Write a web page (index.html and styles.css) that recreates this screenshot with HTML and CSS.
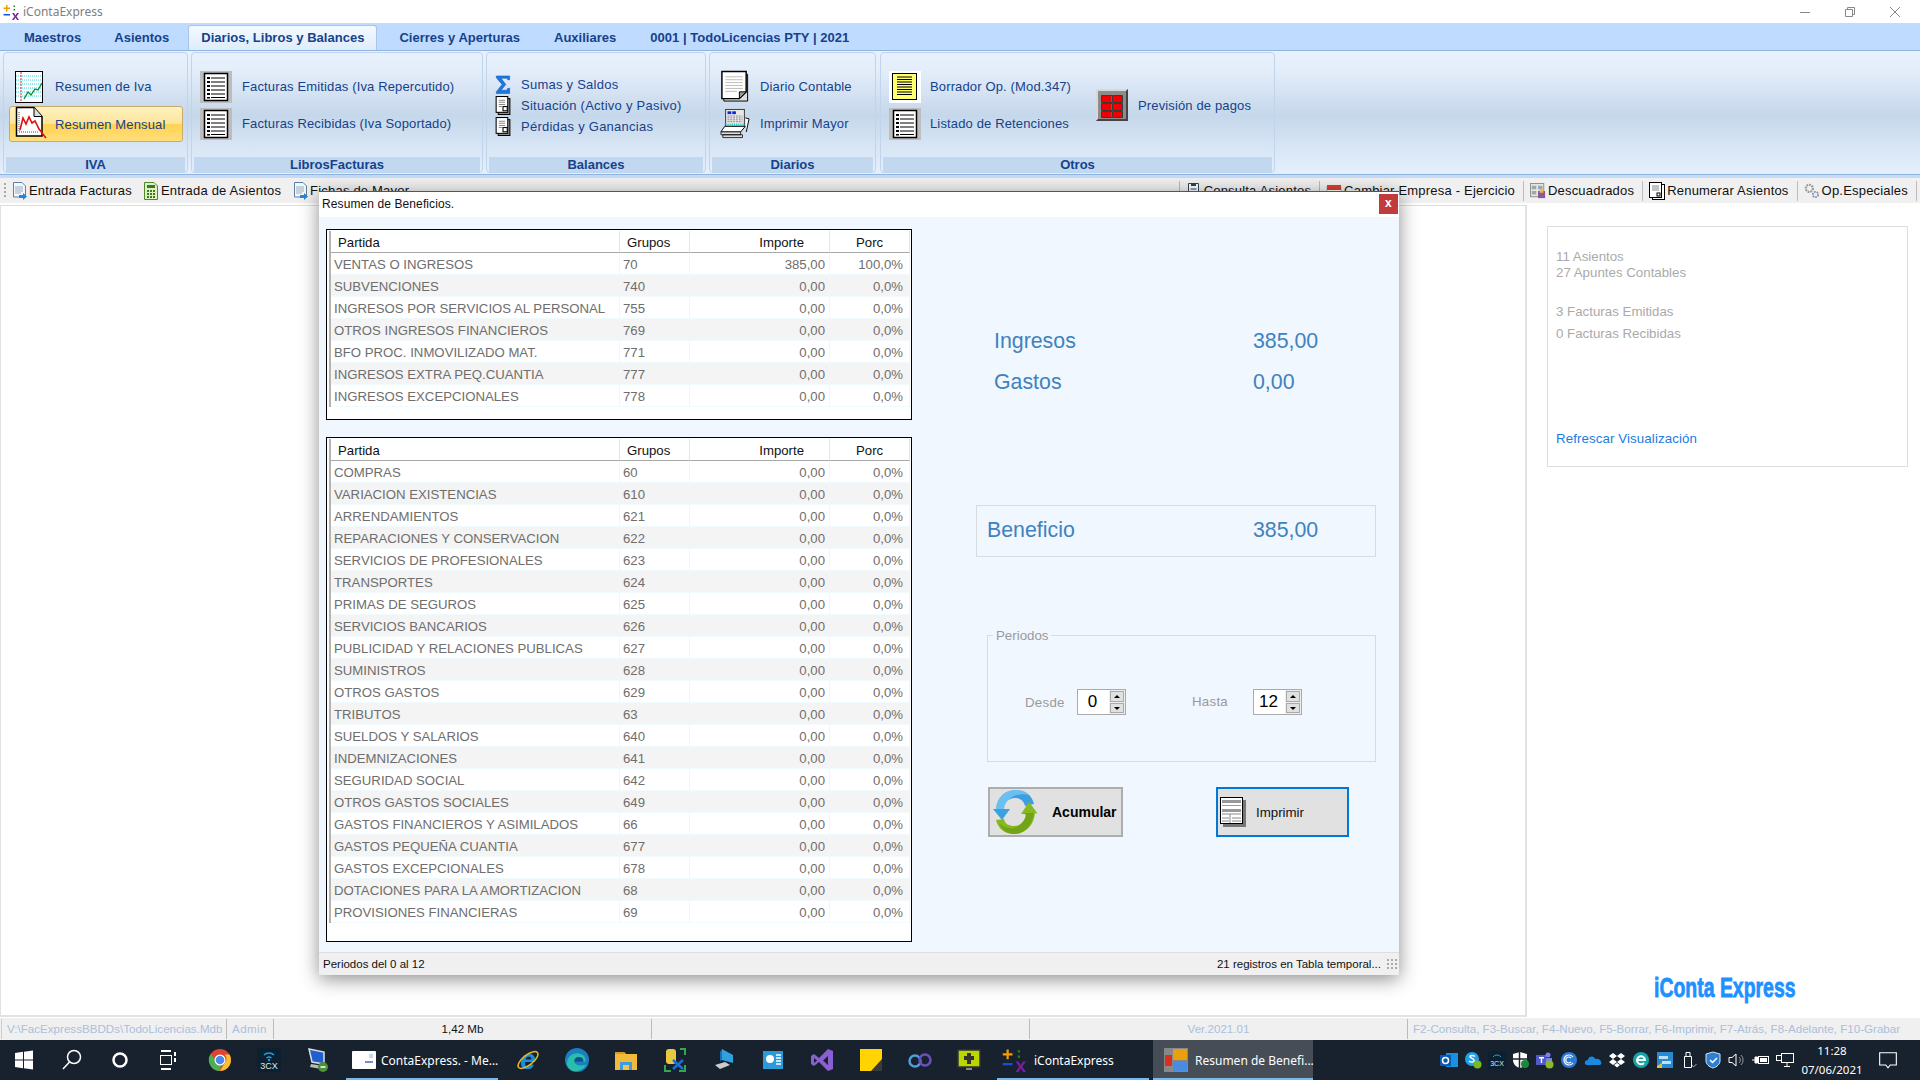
FILE: index.html
```html
<!DOCTYPE html>
<html lang="es">
<head>
<meta charset="utf-8">
<title>iContaExpress</title>
<link rel="stylesheet" href="styles.css">
</head>
<body>
<svg class="defs" width="0" height="0" aria-hidden="true">
  <symbol id="i-conta" viewBox="0 0 32 32"><path d="M6 2h3v5h5v3H9v5H6v-5H1V7h5z" fill="#f59b00"/><path d="M21 3h3v3h-3zM21 10h3v3h-3z" fill="#1b8a1b"/><path d="M1 20h13v3H1z" fill="#1450e0"/><path d="M18 18h4l3 5 3-5h4l-5 7 5 7h-4l-3-5-3 5h-4l5-7z" fill="#7a1fa0"/></symbol>
  <symbol id="i-chart" viewBox="0 0 28 32"><rect x=".5" y=".5" width="27" height="31" fill="#fff" stroke="#000"/><path d="M1 5h26M1 9h26M1 13h26M1 17h26M1 21h26M1 25h26" stroke="#35d5e0" stroke-dasharray="1 1"/><path d="M6 1v30" stroke="#e02020" stroke-dasharray="2 1"/><path d="M9 28l4-7 3 3 4-6 3 1 4-7" fill="none" stroke="#0a8a2a" stroke-width="1.3"/></symbol>
  <symbol id="i-mensual" viewBox="0 0 32 36"><path d="M1.500 1.500H19l8 9V30H1.500z" fill="#fff" stroke="#000" stroke-width="1.500"/><path d="M19 1.500v9h8" fill="#ddd" stroke="#000"/><path d="M4 6v20h20" fill="none" stroke="#555" stroke-dasharray="1 1"/><path d="M5 24l3-12 3 6 3-7 3 6 3-2 4 8 7 9" fill="none" stroke="#e01010" stroke-width="1.600"/></symbol>
  <symbol id="i-list" viewBox="0 0 32 32"><rect width="32" height="32" fill="#bdbdbd"/><rect x="4.500" y="2.500" width="23" height="27" fill="#fff" stroke="#000" stroke-width="1.500"/><path d="M7 6h3v2H7zM7 10h3v2H7zM7 14h3v2H7zM7 18h3v2H7zM7 22h3v2H7zM7 26h3v1.500H7z" fill="#000"/><path d="M11 7h14M11 11h14M11 15h14M11 19h14M11 23h14M11 26.500h14" stroke="#000"/></symbol>
  <symbol id="i-sigma" viewBox="0 0 16 20"><path d="M1 1h14v4h-2l-1-1.500H6l5 6.500-5 6h6l1-2h2v5.500H1v-2l6-7.500-6-7z" fill="#1a78e0" stroke="#0c4fa8" stroke-width=".5"/></symbol>
  <symbol id="i-doc" viewBox="0 0 14 18"><rect x="2.500" y="2.500" width="11" height="15" fill="#999" stroke="#000"/><rect x=".5" y=".5" width="11" height="15" fill="#fff" stroke="#000"/><path d="M3 4h6M3 6h6M3 8h6M3 10h3" stroke="#888"/><rect x="7" y="10" width="4" height="4" fill="#fff" stroke="#000"/></symbol>
  <symbol id="i-diario" viewBox="0 0 30 34"><path d="M3.500 4.500H28V32H3.500z" fill="#ddd" stroke="#000"/><path d="M1.500 1.500h25v21l-7 7H1.500z" fill="#fff" stroke="#000" stroke-width="1.500"/><path d="M19.500 29.500v-7h7z" fill="#999" stroke="#000"/><path d="M5 7h18M5 10h18M5 13h18M5 16h18M5 19h18M5 22h12" stroke="#bbb"/></symbol>
  <symbol id="i-print" viewBox="0 0 32 32"><rect x="6" y="1" width="20" height="18" fill="#e8e8e8" stroke="#333"/><rect x="8" y="3" width="4" height="3" fill="#1528d8"/><rect x="13" y="3" width="4" height="3" fill="#1528d8"/><path d="M8 8h16M8 10h16M8 12h16M8 14h16" stroke="#888" stroke-dasharray="2 1"/><path d="M5 17h22" stroke="#20c8c8" stroke-width="2" stroke-dasharray="1 1"/><path d="M5 19h22l-5 6H1z" fill="#fff" stroke="#000"/><path d="M1 25h21v3H1zM3 28h21v3H3z" fill="#ddd" stroke="#000" stroke-width=".8"/><path d="M27 10l4 1-3 14" fill="#fff" stroke="#000"/></symbol>
  <symbol id="i-yellow" viewBox="0 0 32 32"><rect width="32" height="32" fill="#fff"/><rect x="3" y="2" width="25" height="27" fill="#bbb"/><rect x="3.500" y="2.500" width="24" height="26" fill="#ffff70" stroke="#000"/><path d="M8 6h15M8 8.500h15M8 11h15M8 13.500h15M8 16h15M8 18.500h15M8 21h15M8 23.500h15" stroke="#000"/></symbol>
  <symbol id="i-grid" viewBox="0 0 32 32"><rect width="32" height="32" fill="#8c8c8c"/><path d="M0 0h32l-2 2H2v28l-2 2z" fill="#d8d8d8"/><path d="M32 32H0l2-2h28V2l2-2z" fill="#444"/><path d="M6 7h9v6H6zM17 7h9v6h-9zM6 15h9v6H6zM17 15h9v6h-9zM6 23h9v5H6zM17 23h9v5h-9z" fill="#f00000"/><path d="M5.500 6.500h10.500v7h-10.500zM16.500 6.500h10v7h-10zM5.500 14.500h10.500v7h-10.500zM16.500 14.500h10v7h-10zM5.500 22.500h10.500v6h-10.500zM16.500 22.500h10v6h-10z" fill="none" stroke="#3a3a3a"/></symbol>
  <symbol id="t-doc" viewBox="0 0 16 18"><path d="M2.500 .5H11l3.500 3.500V15h-12z" fill="#f4f8fc" stroke="#5b7fa8"/><path d="M4 5h8M4 7h8M4 9h8M4 11h6" stroke="#9ab"/><path d="M8 13h4v-2l4 3.500-4 3.500v-2H8z" fill="#2a84d8"/></symbol>
  <symbol id="t-calc" viewBox="0 0 16 18"><path d="M1.500 .5H11l3.500 3.500V17.500h-13z" fill="#dff0c8" stroke="#4f8a2a"/><rect x="4" y="3" width="8" height="3" fill="#3f7a1a"/><path d="M4 8h2v2H4zM7 8h2v2H7zM10 8h2v2h-2zM4 11h2v2H4zM7 11h2v2H7zM10 11h2v2h-2zM4 14h2v2H4zM7 14h2v2H7zM10 14h2v2h-2z" fill="#3f7a1a"/></symbol>
  <symbol id="t-cons" viewBox="0 0 14 18"><path d="M1.500 1.500h10v15h-10z" fill="#fff" stroke="#345"/><path d="M4 1h5v3H4z" fill="#246"/><path d="M3.500 7h6M3.500 10h6" stroke="#246"/></symbol>
  <symbol id="t-cal" viewBox="0 0 16 16"><rect x="1" y="4" width="14" height="11" fill="#fff" stroke="#bbb"/><rect x="1" y="2" width="14" height="5" fill="#d8402f"/></symbol>
  <symbol id="t-desc" viewBox="0 0 18 18"><rect x=".5" y=".5" width="15" height="15" fill="#e4e4e4" stroke="#888"/><path d="M2 3h5v4H2zM9 3h5v4H9zM2 9h5v4H2z" fill="#9aa"/><rect x="9" y="9" width="8" height="8" fill="#8a5a9a"/><rect x="11" y="7" width="4" height="4" fill="#e8b850"/></symbol>
  <symbol id="t-renum" viewBox="0 0 16 18"><rect x="3.500" y="2.500" width="12" height="15" fill="#fff" stroke="#000"/><rect x=".5" y=".5" width="12" height="15" fill="#fff" stroke="#000"/><path d="M3 4h7M3 6h7M3 8h7" stroke="#888"/><rect x="8" y="11" width="3" height="3" fill="none" stroke="#000"/></symbol>
  <symbol id="t-gear" viewBox="0 0 18 18"><circle cx="6" cy="6" r="4" fill="none" stroke="#999" stroke-width="2.500" stroke-dasharray="2 1"/><circle cx="13" cy="13" r="3" fill="none" stroke="#7a8fa8" stroke-width="2" stroke-dasharray="2 1"/></symbol>
  <symbol id="r-arrows" viewBox="0 0 44 46"><path d="M3 20C4 8 12 1 23 1c10 0 16 6 18 14l-9 2c-1-5-5-8-10-8-7 0-11 5-11 11h6l-8 11L0 20z" fill="#3b9fe0"/><path d="M3 20C4 8 12 1 23 1c6 0 10 2 13 5-10-2-22 0-25 14z" fill="#7fd0f8" opacity=".7"/><path d="M42 24c-1 12-9 21-21 21-10 0-16-6-18-14l8-1c1 5 5 7 10 7 6 0 11-4 12-12h-5l8-12 9 12z" fill="#86b820"/><path d="M6 34c5 6 20 10 27-7l-2-3h10c-2 12-9 21-20 21-7 0-12-4-15-11z" fill="#5f8f10" opacity=".5"/></symbol>
  <symbol id="r-print" viewBox="0 0 26 30"><rect x="3" y="3" width="23" height="27" fill="#777"/><rect x=".5" y=".5" width="22" height="26" fill="#fff" stroke="#000"/><path d="M2 3h19v3H2zM2 8h19v1H2zM2 12h19v3H2z" fill="#999"/><path d="M2 17h19M10 17v9M2 21h7M12 21h9M2 24h7M12 24h9" stroke="#888"/></symbol>
</svg>

<div class="titlebar">
  <svg class="tb-logo"><use href="#i-conta"/></svg>
  <span class="tb-name">iContaExpress</span>
  <div class="winctl">
    <svg class="wc" viewBox="0 0 14 14"><path d="M2 7.500h10" stroke="#888"/></svg>
    <svg class="wc" viewBox="0 0 14 14"><path d="M2.500 4.500h7v7h-7zM4.500 4.500v-2h7v7h-2" fill="none" stroke="#888"/></svg>
    <svg class="wc" viewBox="0 0 14 14"><path d="M2 2l10 10M12 2L2 12" stroke="#888"/></svg>
  </div>
</div>

<nav class="tabs">
  <span class="tab tab-first">Maestros</span>
  <span class="tab tab-second">Asientos</span>
  <span class="tab tab-active">Diarios, Libros y Balances</span>
  <span class="tab">Cierres y Aperturas</span>
  <span class="tab">Auxiliares</span>
  <span class="tab">0001 | TodoLicencias PTY | 2021</span>
</nav>

<section class="ribbon">
  <div class="rgroup g-iva">
    <div class="rbody rcol">
      <div class="ritem"><svg class="ic-chart"><use href="#i-chart"/></svg><span>Resumen de Iva</span></div>
      <div class="ritem ritem-on"><svg class="ic-mensual"><use href="#i-mensual"/></svg><span>Resumen Mensual</span></div>
    </div>
    <div class="rlabel">IVA</div>
  </div>
  <div class="rgroup g-libros">
    <div class="rbody rcol">
      <div class="ritem"><svg class="ic-32"><use href="#i-list"/></svg><span>Facturas Emitidas (Iva Repercutido)</span></div>
      <div class="ritem"><svg class="ic-32"><use href="#i-list"/></svg><span>Facturas Recibidas (Iva Soportado)</span></div>
    </div>
    <div class="rlabel">LibrosFacturas</div>
  </div>
  <div class="rgroup g-bal">
    <div class="rbody rcol">
      <div class="ritem-s"><svg class="ic-s"><use href="#i-sigma"/></svg><span>Sumas y Saldos</span></div>
      <div class="ritem-s"><svg class="ic-s"><use href="#i-doc"/></svg><span>Situación (Activo y Pasivo)</span></div>
      <div class="ritem-s"><svg class="ic-s"><use href="#i-doc"/></svg><span>Pérdidas y Ganancias</span></div>
    </div>
    <div class="rlabel">Balances</div>
  </div>
  <div class="rgroup g-dia">
    <div class="rbody rcol">
      <div class="ritem"><svg class="ic-diario"><use href="#i-diario"/></svg><span>Diario Contable</span></div>
      <div class="ritem"><svg class="ic-diario"><use href="#i-print"/></svg><span>Imprimir Mayor</span></div>
    </div>
    <div class="rlabel">Diarios</div>
  </div>
  <div class="rgroup g-otros">
    <div class="rbody rrow">
      <div class="rcol otros-a">
        <div class="ritem"><svg class="ic-32"><use href="#i-yellow"/></svg><span>Borrador Op. (Mod.347)</span></div>
        <div class="ritem"><svg class="ic-32"><use href="#i-list"/></svg><span>Listado de Retenciones</span></div>
      </div>
      <div class="ritem otros-b"><svg class="ic-32"><use href="#i-grid"/></svg><span>Previsión de pagos</span></div>
    </div>
    <div class="rlabel">Otros</div>
  </div>
</section>

<div class="toolbar">
  <div class="tgroup">
    <span class="grip"></span>
    <span class="titem"><svg class="ic-t"><use href="#t-doc"/></svg>Entrada Facturas</span>
    <span class="titem"><svg class="ic-t"><use href="#t-calc"/></svg>Entrada de Asientos</span>
    <span class="titem"><svg class="ic-t"><use href="#t-doc"/></svg>Fichas de Mayor</span>
  </div>
  <div class="tgroup tgroup-r">
    <span class="titem tsep"><svg class="ic-t"><use href="#t-cons"/></svg>Consulta Asientos</span>
    <span class="titem tsep"><svg class="ic-t"><use href="#t-cal"/></svg>Cambiar Empresa - Ejercicio</span>
    <span class="titem tsep"><svg class="ic-t"><use href="#t-desc"/></svg>Descuadrados</span>
    <span class="titem tsep"><svg class="ic-t"><use href="#t-renum"/></svg>Renumerar Asientos</span>
    <span class="titem tsep tlast"><svg class="ic-t"><use href="#t-gear"/></svg>Op.Especiales</span>
  </div>
</div>

<main class="workspace">
  <div class="canvas"></div>
  <aside class="side">
    <div class="card">
      <p class="c1">11 Asientos</p>
      <p>27 Apuntes Contables</p>
      <p class="c2">3 Facturas Emitidas</p>
      <p class="c3">0 Facturas Recibidas</p>
      <p class="c4">Refrescar Visualización</p>
    </div>
    <div class="brand"><span>iConta Express</span></div>
  </aside>
</main>

<footer class="status">
  <span class="sc sc-path">V:\FacExpressBBDDs\TodoLicencias.Mdb</span>
  <span class="sc sc-user">Admin</span>
  <span class="sc sc-size">1,42 Mb</span>
  <span class="sc sc-empty"></span>
  <span class="sc sc-ver">Ver.2021.01</span>
  <span class="sc sc-keys">F2-Consulta, F3-Buscar, F4-Nuevo, F5-Borrar, F6-Imprimir, F7-Atrás, F8-Adelante, F10-Grabar</span>
</footer>

<div class="taskbar">
  <div class="tk-left">
    <span class="tk tk-sys"><svg class="ti" viewBox="0 0 24 24"><path d="M3 5l8-1.200v7.700H3zM12 3.700L21 2.500v9h-9zM3 12.500h8v7.700L3 19zM12 12.500h9v9l-9-1.200z" fill="#fff"/></svg></span>
    <span class="tk tk-sys"><svg class="ti" viewBox="0 0 24 24"><circle cx="14" cy="9" r="6.500" fill="none" stroke="#fff" stroke-width="1.500"/><path d="M9.500 14L3 21" stroke="#fff" stroke-width="1.500"/></svg></span>
    <span class="tk tk-sys"><svg class="ti" viewBox="0 0 24 24"><circle cx="12" cy="12" r="6.500" fill="none" stroke="#fff" stroke-width="2.500"/></svg></span>
    <span class="tk tk-sys"><svg class="ti" viewBox="0 0 24 24"><path d="M5 2h10v2H5zM5 20h10v2H5zM18 4h2v4h-2zM18 10h2v4h-2z" fill="#fff"/><rect x="4.500" y="7.500" width="11" height="9" fill="none" stroke="#fff"/></svg></span>
    <span class="tk tk-chrome"><svg class="ti" viewBox="0 0 24 24"><circle cx="12" cy="12" r="11" fill="#db4437"/><path d="M21.500 6.500A11 11 0 0 1 12 23l5-8.500a5.500 5.500 0 0 0-.5-8z" fill="#fbc02d"/><path d="M12 23A11 11 0 0 1 3 5.500L8 14a5.500 5.500 0 0 0 5 3.500z" fill="#4caf50"/><circle cx="12" cy="12" r="5.500" fill="#fff"/><circle cx="12" cy="12" r="4.300" fill="#4a8af0"/></svg></span>
    <span class="tk"><svg class="ti" viewBox="0 0 24 24"><rect width="24" height="24" rx="2" fill="#0c2030"/><path d="M7 7a7 7 0 0 1 10 0M9.500 10a4 4 0 0 1 5 0" fill="none" stroke="#1fa0d8" stroke-width="1.500"/><circle cx="12" cy="12" r="1.200" fill="#1fa0d8"/><text x="12" y="21" class="svgtxt">3CX</text></svg></span>
    <span class="tk"><svg class="ti" viewBox="0 0 24 24"><path d="M3 1l15 3v12L6 14z" fill="#1f5fcf" stroke="#ddd" stroke-width="1.500"/><path d="M5 16l13 2-3 3-11-2z" fill="#bbb"/><circle cx="17" cy="19" r="5" fill="#4f8f3a"/><path d="M14.500 19h5" stroke="#fff" stroke-width="1.500"/></svg></span>
    <span class="tk-app tk-on tk-mail"><svg class="ti" viewBox="0 0 24 24"><rect y="3" width="24" height="18" rx="1" fill="#fff"/><path d="M13 13h8v2h-8z" fill="#6d93c8"/><path d="M17 6h4v4h-4z" fill="#c8d8ec"/></svg><span>ContaExpress. - Me...</span></span>
    <span class="tk"><svg class="ti" viewBox="0 0 24 24"><text x="12" y="21" class="svg-e">e</text><ellipse cx="12" cy="12" rx="12" ry="5" transform="rotate(-38 12 12)" fill="none" stroke="#e8b420" stroke-width="1.500"/></svg></span>
    <span class="tk"><svg class="ti" viewBox="0 0 26 26"><circle cx="13" cy="13" r="13" fill="#1a7fc0"/><path d="M2 16C3 8 10 5 15 6c6 1 8 5 7 9H10c1 4 6 5 13 3-3 6-9 8-14 7-4-1-7-5-7-9z" fill="#2fc8a8" opacity=".85"/><path d="M10 15c0-4 3-6 6-5 3 0 4 2 4 5z" fill="#0d4f88"/></svg></span>
    <span class="tk"><svg class="ti" viewBox="0 0 24 24"><path d="M1 4h9l2 2h11v16H1z" fill="#f0b93a"/><path d="M1 4h9l2 2H1z" fill="#d89a20"/><rect x="6" y="14" width="12" height="8" fill="#3d9be0"/><rect x="9" y="17" width="6" height="5" fill="#f0c64a"/></svg></span>
    <span class="tk"><svg class="ti" viewBox="0 0 24 24"><rect x="3" y="1" width="10" height="15" rx="3" fill="#e8c840"/><path d="M2 17v6h6M22 17v6h-6M22 7V1h-5" fill="none" stroke="#2fa84f" stroke-width="2"/><path d="M10 12l10 9M20 12L10 21" stroke="#1a70d8" stroke-width="2.500"/></svg></span>
    <span class="tk"><svg class="ti" viewBox="0 0 24 24"><path d="M10 1l11 6v8l-11-3z" fill="#2fa0e0"/><path d="M10 1v11l-2 1V4z" fill="#1a70b0"/><path d="M3 17l10-3 5 3-10 4z" fill="#ccc"/></svg></span>
    <span class="tk"><svg class="ti" viewBox="0 0 24 24"><rect x="2" y="3" width="20" height="18" fill="#2a9ad8"/><circle cx="9" cy="11" r="4" fill="#fff"/><path d="M15 7h5M15 10h5M15 13h5M15 16h5" stroke="#fff" stroke-width="1.500"/></svg></span>
    <span class="tk"><svg class="ti" viewBox="0 0 24 24"><path d="M1 8l3-2 5 4 9-9 5 2v18l-5 2-9-9-5 4-3-2zM4 10v5l3-2.500zM18 8l-5 4.500 5 4.500z" fill="#8a5fd0"/></svg></span>
    <span class="tk"><svg class="ti" viewBox="0 0 24 24"><rect x="1" y="1" width="22" height="22" fill="#ffd400"/><path d="M23 11L12 23h11z" fill="#3a3a3a"/></svg></span>
    <span class="tk"><svg class="ti" viewBox="0 0 24 24"><circle cx="7" cy="13" r="5.500" fill="none" stroke="#4f9fd8" stroke-width="2.500"/><circle cx="17" cy="12" r="5.500" fill="none" stroke="#6a4fc0" stroke-width="2.500"/></svg></span>
    <span class="tk"><svg class="ti" viewBox="0 0 24 24"><rect x="1" y="2" width="22" height="17" fill="#b8d800" stroke="#333" stroke-width="1.500"/><path d="M10 5h4v3h3v4h-3v4h-4v-4H7V8h3z" fill="#333"/><path d="M9 21h6" stroke="#888" stroke-width="2"/></svg></span>
    <span class="tk-app tk-on tk-conta"><svg class="ti"><use href="#i-conta"/></svg><span>iContaExpress</span></span>
    <span class="tk-app tk-on tk-active"><svg class="ti" viewBox="0 0 24 24"><rect width="24" height="24" fill="#888"/><rect x="9" y="1" width="14" height="11" fill="#e8a010"/><rect x="9" y="13" width="14" height="10" fill="#4a8ae0"/><rect x="1" y="7" width="7" height="11" fill="#d83020"/></svg><span>Resumen de Benefi...</span></span>
  </div>
  <div class="tk-tray">
    <svg class="tr" viewBox="0 0 18 18"><rect x="6" y="2" width="12" height="14" fill="#1a90e0"/><rect y="4" width="11" height="11" fill="#0a5ab0"/><circle cx="5.500" cy="9.500" r="3" fill="none" stroke="#fff" stroke-width="1.500"/></svg>
    <svg class="tr" viewBox="0 0 18 18"><circle cx="8" cy="8" r="7" fill="#1fa0e8"/><path d="M5 10c2 2 6 1 5-1S6 7 6 5.500s4-1 5 0" fill="none" stroke="#fff" stroke-width="1.500"/><circle cx="13.500" cy="13.500" r="4" fill="#7ab82a"/></svg>
    <svg class="tr" viewBox="0 0 18 18"><rect width="18" height="18" fill="#0c2030"/><path d="M5 6a5 5 0 0 1 8 0" fill="none" stroke="#1fa0d8"/><text x="9" y="15" class="svgtxt svgtxt-s">3CX</text></svg>
    <svg class="tr" viewBox="0 0 18 18"><path d="M8 1l7 2v6c0 4-3 7-7 8-4-1-7-4-7-8V3z" fill="#fff"/><path d="M7.500 1v16M1 8h14" stroke="#18222e" stroke-width="1.500"/><circle cx="13" cy="13" r="4" fill="#1a8a3a"/></svg>
    <svg class="tr" viewBox="0 0 18 18"><rect y="4" width="10" height="10" fill="#5059c9"/><path d="M3 6h5v1.500H6.200V12H4.800V7.500H3z" fill="#fff"/><circle cx="12" cy="4" r="2.500" fill="#7b83eb"/><rect x="10" y="7" width="6" height="6" fill="#7b83eb"/><circle cx="13.500" cy="13.500" r="4" fill="#8ab82a"/></svg>
    <svg class="tr" viewBox="0 0 18 18"><circle cx="9" cy="9" r="8" fill="#2a7ad8"/><path d="M13 6a5 5 0 1 0 0 6M11 7a3 3 0 1 0 0 4" fill="none" stroke="#fff" stroke-width="1.200"/></svg>
    <svg class="tr" viewBox="0 0 18 18"><path d="M3 14c-3 0-3-5 1-5 0-4 6-5 7-1 3-1 6 1 6 3 1 2 0 3-2 3z" fill="#1a8ae0"/></svg>
    <svg class="tr" viewBox="0 0 18 18"><path d="M5 2l4 3-4 3-4-3zM13 2l4 3-4 3-4-3zM5 8l4 3-4 3-4-3zM13 8l4 3-4 3-4-3zM9 12l3 2-3 2.500L6 14z" fill="#fff"/></svg>
    <svg class="tr" viewBox="0 0 18 18"><circle cx="9" cy="9" r="8" fill="#16a5a5"/><path d="M5 9h8a4 4 0 1 0-1 3" fill="none" stroke="#fff" stroke-width="2"/></svg>
    <svg class="tr" viewBox="0 0 18 18"><rect x="1" y="1" width="16" height="16" fill="#2a8ad0"/><path d="M3 5h9v3H3zM6 10h9v3H6z" fill="#bfe0f4"/><path d="M1 15l5-3v5H1z" fill="#e8c030"/></svg>
    <svg class="tr" viewBox="0 0 18 18"><path d="M4.500 5.500h7v11h-7zM6 1.500h4v4H6z" fill="none" stroke="#fff"/><path d="M12 14l1.500 2 3-3" fill="none" stroke="#aaa"/></svg>
    <svg class="tr" viewBox="0 0 18 18"><path d="M9 1l7 2v7c0 3-3 6-7 7-4-1-7-4-7-7V3z" fill="#2f7fd0" stroke="#cfe4f8"/><path d="M6 9l2.500 2.500L13 7" fill="none" stroke="#fff" stroke-width="1.500"/></svg>
    <svg class="tr" viewBox="0 0 18 18"><path d="M1 6.500h3l4-3.500v12l-4-3.500H1z" fill="none" stroke="#fff"/><path d="M11 6a4 4 0 0 1 0 6M13 4a7 7 0 0 1 0 10" fill="none" stroke="#999"/></svg>
    <svg class="tr" viewBox="0 0 18 18"><rect x="6.500" y="5.500" width="10" height="7" fill="none" stroke="#fff"/><rect x="8" y="7" width="7" height="4" fill="#fff"/><path d="M0 9h3M3 6h2.500v6H3z" fill="#fff" stroke="#fff"/></svg>
    <svg class="tr" viewBox="0 0 18 18"><rect x="5.500" y="2.500" width="12" height="9" fill="none" stroke="#fff"/><rect x=".5" y="4.500" width="5" height="5" fill="#18222e" stroke="#fff"/><path d="M11 12v3M8 15.500h6" stroke="#fff"/></svg>
    <div class="clock"><span>11:28</span><span>07/06/2021</span></div>
    <svg class="notif" viewBox="0 0 18 18"><path d="M1.500 2.500h15v11H11l-2 2.500-2-2.500H1.500z" fill="none" stroke="#fff"/></svg>
  </div>
</div>

<section class="dialog">
  <header class="d-title"><span class="d-name">Resumen de Beneficios.</span><span class="d-close">x</span></header>
  <div class="d-body">
    <div class="d-left">
      <div class="tbox tbox-a">
        <table class="grid">
          <colgroup><col class="c-p"><col class="c-g"><col class="c-i"><col class="c-o"></colgroup>
          <thead><tr><th class="h-p">Partida</th><th class="h-g">Grupos</th><th class="h-i">Importe</th><th class="h-o">Porc</th></tr></thead>
          <tbody>
            <tr><td>VENTAS O INGRESOS</td><td>70</td><td class="n">385,00</td><td class="n">100,0%</td></tr>
            <tr><td>SUBVENCIONES</td><td>740</td><td class="n">0,00</td><td class="n">0,0%</td></tr>
            <tr><td>INGRESOS POR SERVICIOS AL PERSONAL</td><td>755</td><td class="n">0,00</td><td class="n">0,0%</td></tr>
            <tr><td>OTROS INGRESOS FINANCIEROS</td><td>769</td><td class="n">0,00</td><td class="n">0,0%</td></tr>
            <tr><td>BFO PROC. INMOVILIZADO MAT.</td><td>771</td><td class="n">0,00</td><td class="n">0,0%</td></tr>
            <tr><td>INGRESOS EXTRA PEQ.CUANTIA</td><td>777</td><td class="n">0,00</td><td class="n">0,0%</td></tr>
            <tr><td>INGRESOS EXCEPCIONALES</td><td>778</td><td class="n">0,00</td><td class="n">0,0%</td></tr>
          </tbody>
        </table>
      </div>
      <div class="tbox tbox-b">
        <table class="grid">
          <colgroup><col class="c-p"><col class="c-g"><col class="c-i"><col class="c-o"></colgroup>
          <thead><tr><th class="h-p">Partida</th><th class="h-g">Grupos</th><th class="h-i">Importe</th><th class="h-o">Porc</th></tr></thead>
          <tbody>
            <tr><td>COMPRAS</td><td>60</td><td class="n">0,00</td><td class="n">0,0%</td></tr>
            <tr><td>VARIACION EXISTENCIAS</td><td>610</td><td class="n">0,00</td><td class="n">0,0%</td></tr>
            <tr><td>ARRENDAMIENTOS</td><td>621</td><td class="n">0,00</td><td class="n">0,0%</td></tr>
            <tr><td>REPARACIONES Y CONSERVACION</td><td>622</td><td class="n">0,00</td><td class="n">0,0%</td></tr>
            <tr><td>SERVICIOS DE PROFESIONALES</td><td>623</td><td class="n">0,00</td><td class="n">0,0%</td></tr>
            <tr><td>TRANSPORTES</td><td>624</td><td class="n">0,00</td><td class="n">0,0%</td></tr>
            <tr><td>PRIMAS DE SEGUROS</td><td>625</td><td class="n">0,00</td><td class="n">0,0%</td></tr>
            <tr><td>SERVICIOS BANCARIOS</td><td>626</td><td class="n">0,00</td><td class="n">0,0%</td></tr>
            <tr><td>PUBLICIDAD Y RELACIONES PUBLICAS</td><td>627</td><td class="n">0,00</td><td class="n">0,0%</td></tr>
            <tr><td>SUMINISTROS</td><td>628</td><td class="n">0,00</td><td class="n">0,0%</td></tr>
            <tr><td>OTROS GASTOS</td><td>629</td><td class="n">0,00</td><td class="n">0,0%</td></tr>
            <tr><td>TRIBUTOS</td><td>63</td><td class="n">0,00</td><td class="n">0,0%</td></tr>
            <tr><td>SUELDOS Y SALARIOS</td><td>640</td><td class="n">0,00</td><td class="n">0,0%</td></tr>
            <tr><td>INDEMNIZACIONES</td><td>641</td><td class="n">0,00</td><td class="n">0,0%</td></tr>
            <tr><td>SEGURIDAD SOCIAL</td><td>642</td><td class="n">0,00</td><td class="n">0,0%</td></tr>
            <tr><td>OTROS GASTOS SOCIALES</td><td>649</td><td class="n">0,00</td><td class="n">0,0%</td></tr>
            <tr><td>GASTOS FINANCIEROS Y ASIMILADOS</td><td>66</td><td class="n">0,00</td><td class="n">0,0%</td></tr>
            <tr><td>GASTOS PEQUEÑA CUANTIA</td><td>677</td><td class="n">0,00</td><td class="n">0,0%</td></tr>
            <tr><td>GASTOS EXCEPCIONALES</td><td>678</td><td class="n">0,00</td><td class="n">0,0%</td></tr>
            <tr><td>DOTACIONES PARA LA AMORTIZACION</td><td>68</td><td class="n">0,00</td><td class="n">0,0%</td></tr>
            <tr><td>PROVISIONES FINANCIERAS</td><td>69</td><td class="n">0,00</td><td class="n">0,0%</td></tr>
          </tbody>
        </table>
      </div>
    </div>
    <div class="d-right">
      <div class="sum">
        <div class="sum-row"><span class="sum-l">Ingresos</span><span>385,00</span></div>
        <div class="sum-row"><span class="sum-l">Gastos</span><span>0,00</span></div>
      </div>
      <div class="benef"><span class="benef-l">Beneficio</span><span>385,00</span></div>
      <div class="periods">
        <span class="legend">Periodos</span>
        <span class="plabel pl-d">Desde</span>
        <span class="spin"><span class="spin-v">0</span><span class="spin-b"><i class="up"></i><i class="down"></i></span></span>
        <span class="plabel pl-h">Hasta</span>
        <span class="spin"><span class="spin-v">12</span><span class="spin-b"><i class="up"></i><i class="down"></i></span></span>
      </div>
      <div class="actions">
        <button class="btn btn-acum"><svg class="ic-acum"><use href="#r-arrows"/></svg><b>Acumular</b></button>
        <button class="btn btn-print"><svg class="ic-rprint"><use href="#r-print"/></svg><span>Imprimir</span></button>
      </div>
    </div>
  </div>
  <footer class="d-status"><span>Periodos del 0 al 12</span><span class="d-st-r">21 registros en Tabla temporal...<i class="sizegrip"></i></span></footer>
</section>
</body>
</html>
```
FILE: styles.css
```css
* { box-sizing: border-box; }
html, body { margin: 0; padding: 0; }
body {
  width: 1920px; height: 1080px; overflow: hidden; position: relative;
  display: flex; flex-direction: column; background: #fff;
  font-family: "Liberation Sans", Arial, sans-serif; font-size: 13px;
}
.defs { position: absolute; }

/* title bar */
.titlebar { height: 23px; display: flex; align-items: center; background: #fff; flex: none; }
.tb-logo { width: 16px; height: 16px; margin-left: 3px; }
.tb-name { margin-left: 4px; font: 12px "Noto Sans", sans-serif; color: #808080; }
.winctl { margin-left: auto; display: flex; gap: 31px; padding-right: 18px; }
.wc { width: 14px; height: 14px; display: block; }

/* tabs */
.tabs { height: 27px; flex: none; background: #bfdbff; display: flex; align-items: flex-end; padding-left: 7px; font-weight: bold; color: #15428b; }
.tab { height: 25px; padding: 0 17px; display: flex; align-items: center; letter-spacing: .02px; }
.tab-first { padding-right: 16px; }
.tab-second { padding-right: 14px; }
.tab-active { margin: 0 5px; padding: 0 12px 2px; background: linear-gradient(#f4f9ff, #dfecfb); border: 1px solid #a8c4e8; border-bottom: 0; border-radius: 3px 3px 0 0; }

/* ribbon */
.ribbon {
  height: 128px; flex: none; display: flex; gap: 3px; padding: 1px 0 5px 3px;
  background: linear-gradient(#e8f1fd 0, #e4eefb 15%, #c5d7ea 52%, #d6e4f4 75%, #e6f0fc 100%);
  border-top: 1px solid #90b4e0; border-bottom: 3px solid #c4dcf8; box-shadow: inset 0 -1px 0 #90b4e0;
}
.rgroup { display: flex; flex-direction: column; border: 1px solid #c0d4ec; border-radius: 4px; overflow: hidden; height: 121px; color: #15428b; }
.g-iva { width: 185px; }
.g-libros { width: 292px; }
.g-bal { width: 220px; }
.g-dia { width: 167px; }
.g-otros { width: 395px; margin-left: 1px; }
.rbody { height: 104px; display: flex; }
.rcol { flex-direction: column; justify-content: center; display: flex; }
.rrow { align-items: center; }
.otros-a { width: 207px; }
.rlabel { height: 15px; margin: 0 2px; background: #c1d8f0; text-align: center; font-weight: bold; line-height: 15px; }
.ritem { height: 37px; display: flex; align-items: center; padding-left: 8px; letter-spacing: .14px; }
.ritem > svg { flex: none; }
.ic-32 { width: 32px; height: 32px; margin-right: 10px; }
.g-iva .ritem { margin: 0 4px 0 5px; padding-left: 6px; }
.ic-chart { width: 28px; height: 32px; margin-right: 12px; }
.ic-mensual { width: 32px; height: 36px; margin: 0 8px 0 0; }
.ritem-on { background: linear-gradient(#fdf1c0 0, #fde69a 48%, #ffd24f 52%, #ffdf7e 100%); border: 1px solid #c8ab6a; border-radius: 3px; padding-left: 5px !important; height: 36px !important; margin-top: 1px !important; }
.ic-diario { width: 30px; height: 33px; margin-right: 10px; }
.ritem-s { height: 21px; display: flex; align-items: center; padding-left: 8px; letter-spacing: .25px; }
.ic-s { width: 16px; height: 19px; margin-right: 10px; flex: none; }
.g-dia .ritem { padding-left: 10px; }
.otros-a .ic-32 { margin-right: 9px; }
.otros-b { padding-left: 8px; }

/* toolbar */
.toolbar { height: 25px; flex: none; background: #f0f0f0; display: flex; justify-content: space-between; align-items: center; color: #111; }
.tgroup { display: flex; align-items: center; height: 100%; }
.tgroup-r { padding-right: 3px; }
.grip { width: 2px; height: 15px; margin: 0 5px 0 4px; background: repeating-linear-gradient(#aaa 0 2px, transparent 2px 4px); }
.titem { display: flex; align-items: center; height: 20px; padding-right: 11px; letter-spacing: .2px; }
.tsep { border-left: 1px solid #bbb; padding: 0 8px 0 6px; }
.tlast { border-right: 1px solid #bbb; }
.ic-t { width: 16px; height: 18px; margin-right: 2px; flex: none; }

/* workspace */
.workspace { flex: 1; display: flex; min-height: 0; border-bottom: 1px solid #fff; }
.canvas { width: 1527px; margin-top: 2px; border: 1px solid #e2e2e2; border-top-color: #ddd; border-right-width: 2px; border-bottom-width: 2px; }
.side { flex: 1; padding: 23px 0 0 20px; display: flex; flex-direction: column; }
.card { width: 361px; height: 241px; border: 1px solid #dedede; padding: 22px 0 0 8px; color: #aaa; font-size: 13.300px; line-height: 16px; }
.card p { margin: 0; }
.c2 { margin-top: 23px !important; }
.c3 { margin-top: 6px !important; }
.c4 { margin-top: 89px !important; color: #1a7de0; letter-spacing: .1px; }
.brand { margin: auto 0 13px 107px; font: bold 27px "Liberation Sans", sans-serif; color: #1e90ff; -webkit-text-stroke: .8px #1e90ff; white-space: nowrap; }
.brand span { display: inline-block; transform: scaleX(.72); transform-origin: 0 50%; }

/* status bar */
.status { height: 22px; flex: none; background: #f0f0f0; display: flex; align-items: center; font-size: 11.600px; color: #a9c0dc; padding-left: 1px; }
.sc { height: 20px; line-height: 20px; padding-left: 5px; white-space: nowrap; border-left: 1px solid #bbb; }
.sc-path { width: 225px; border-left-color: #ccc; }
.sc-user { width: 47px; letter-spacing: .4px; }
.sc-size { width: 378px; text-align: center; color: #111; padding: 0 ; }
.sc-empty { width: 378px; }
.sc-ver { width: 378px; text-align: center; padding: 0; }
.sc-keys { flex: 1; }

/* taskbar */
.taskbar { height: 40px; flex: none; background: #18222e; display: flex; color: #fff; font: 12px "Noto Sans", sans-serif; }
.tk-left { display: flex; flex: 1; }
.tk { width: 49px; display: flex; align-items: center; justify-content: center; flex: none; }
.tk-sys { width: 48px; }
.tk-chrome { margin-left: 3px; }
.ti { width: 24px; height: 24px; display: block; flex: none; }
.tk-app { display: flex; align-items: center; gap: 5px; flex: none; white-space: nowrap; padding-left: 6px; }
.tk-on { box-shadow: inset 0 -2px 0 #76b9ed; }
.tk-mail { width: 152px; margin: 0 5px 0 4px; }
.tk-conta { width: 152px; margin-left: 4px; padding-left: 5px; gap: 8px; }
.tk-active { width: 160px; margin-left: 4px; background: #464d57; padding-left: 11px; gap: 7px; }
.tk-tray { display: flex; align-items: center; gap: 6px; padding-right: 22px; }
.tr { width: 18px; height: 18px; flex: none; display: block; }
.clock { display: flex; flex-direction: column; align-items: center; line-height: 19px; width: 64px; font-size: 11.500px; }
.notif { width: 20px; height: 20px; margin-left: 8px; display: block; }
.svgtxt { font: 9px "Liberation Sans", sans-serif; fill: #dfe8ef; text-anchor: middle; }
.svgtxt-s { font-size: 7px; }
.svg-e { font: italic bold 28px "Liberation Sans", sans-serif; fill: #1a8fe0; text-anchor: middle; }

/* dialog */
.dialog { position: absolute; left: 319px; top: 191px; width: 1080px; height: 784px; display: flex; flex-direction: column; background: #f0f7ff; border-top: 1px solid #555; box-shadow: 0 4px 18px rgba(0,0,0,.45); }
.d-title { height: 25px; flex: none; background: #fff; display: flex; align-items: center; justify-content: space-between; padding-left: 3px; font-size: 12px; color: #111; letter-spacing: .1px; }
.d-name { padding-bottom: 2px; }
.d-close { width: 19px; height: 20px; background: #c23b3b; color: #fff; font-weight: bold; text-align: center; line-height: 18px; margin: 0 1px 1px 0; }
.d-body { flex: 1; display: flex; min-height: 0; }
.d-left { width: 657px; padding: 12px 0 0 7px; display: flex; flex-direction: column; gap: 17px; }
.tbox { width: 586px; border: 1px solid #000; background: #fff; padding: 1px 0 0 2px; }
.tbox-a { height: 191px; }
.tbox-b { height: 505px; }
.grid { width: 581px; table-layout: fixed; border-collapse: separate; border-spacing: 0; border-left: 2px solid #b4b4b4; font-size: 13.200px; }
.c-p { width: 289px; } .c-g { width: 70px; } .c-i { width: 140px; } .c-o { width: 80px; }
.grid th { height: 22px; padding: 2px 0 0; font-weight: normal; color: #111; text-align: left; border-right: 1px solid #e4e4e4; border-bottom: 1px solid #a8a8a8; background: #fff; }
.h-p { padding-left: 7px !important; }
.h-g { padding-left: 7px !important; }
.h-i { text-align: right !important; padding-right: 25px !important; }
.h-o { padding-left: 26px !important; }
.grid td { height: 22px; padding: 2px 0 0 3px; color: #6e6e6e; border-right: 1px solid #e6faff; border-bottom: 1px solid #effbff; white-space: nowrap; overflow: hidden; }
.grid tr:nth-child(even) td { background: #f4f4f4; }
.grid td.n { text-align: right; padding-right: 4px; }
.grid td:last-child.n { padding-right: 6px; }

.d-right { flex: 1; padding-top: 104px; color: #3f82bd; font-size: 21.330px; }
.sum { padding-left: 18px; }
.sum-row { height: 41px; display: flex; align-items: center; padding-bottom: 1px; }
.benef { margin-top: 102px; width: 400px; height: 52px; border: 1px solid #d8dce0; padding: 0 0 2px 10px; display: flex; align-items: center; }
.sum-l { width: 259px; }
.benef-l { width: 266px; }
.periods { position: relative; margin: 78px 0 0 11px; width: 389px; height: 127px; border: 1px solid #d8dce0; display: flex; align-items: center; padding: 7px 0 0 37px; font-size: 13.300px; color: #9a9a9a; }
.legend { position: absolute; left: 5px; top: -8px; padding: 0 3px; background: #f0f7ff; line-height: 16px; }
.plabel { width: 52px; letter-spacing: .25px; }
.pl-h { margin-left: 66px; width: 61px; padding-bottom: 2px; }
.spin { width: 49px; height: 26px; background: #fff; border: 1px solid #aaa; display: flex; color: #000; font-size: 17px; }
.spin-v { flex: 1; padding-right: 2px; text-align: center; line-height: 23px; }
.spin-b { width: 16px; padding: 1px; display: flex; flex-direction: column; gap: 1px; background: #eee; }
.spin-b i { flex: 1; background: #e1e1e1; border: 1px solid #aaa; position: relative; }
.spin-b i::after { content: ""; position: absolute; left: 3px; top: 3px; border: 3px solid transparent; border-top-width: 0; border-bottom-color: #000; }
.spin-b i.down::after { border-top-width: 3px; border-bottom-width: 0; border-top-color: #000; border-bottom-color: transparent; }
.actions { display: flex; margin: 25px 0 0 12px; gap: 93px; }
.btn { height: 50px; background: #e1e1e1; border: 2px solid #adadad; padding: 0; display: flex; align-items: center; font: 13.300px "Liberation Sans", sans-serif; color: #111; text-align: left; }
.btn-acum { width: 135px; }
.ic-acum { width: 44px; height: 46px; margin: 0 15px 0 3px; flex: none; }
.btn-acum b { color: #000; font-size: 14px; }
.btn-print { width: 133px; border-color: #0078d7; }
.ic-rprint { width: 26px; height: 30px; margin: 0 10px 0 2px; flex: none; }
.d-status { height: 23px; flex: none; background: #f0f0f0; border-top: 1px solid #ddd; display: flex; align-items: center; justify-content: space-between; padding-left: 4px; font-size: 11.500px; color: #111; }
.d-st-r { display: flex; align-items: center; }
.sizegrip { width: 12px; height: 12px; margin: 0 1px 0 5px; background: radial-gradient(circle, #aaa 1px, transparent 1.200px) 0 0 / 4px 4px; }
```
